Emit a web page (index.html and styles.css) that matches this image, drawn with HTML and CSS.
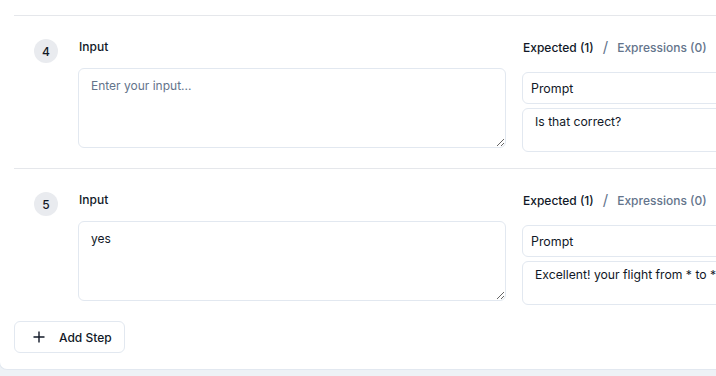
FILE: index.html
```html
<!DOCTYPE html>
<html>
<head>
<meta charset="utf-8">
<link rel="stylesheet" href="styles.css">
</head>
<body>
<div class="card">
  <div class="step">
    <div class="num">4</div>
    <div class="col left">
      <div class="label">Input</div>
      <textarea class="ta" placeholder="Enter your input..."></textarea>
    </div>
    <div class="col right">
      <div class="tabs"><span class="active">Expected (1)</span><span class="slash">/</span><span class="muted">Expressions (0)</span></div>
      <div class="prompt">Prompt</div>
      <div class="msg">Is that correct?</div>
    </div>
  </div>
  <div class="step">
    <div class="num">5</div>
    <div class="col left">
      <div class="label">Input</div>
      <textarea class="ta">yes</textarea>
    </div>
    <div class="col right">
      <div class="tabs"><span class="active">Expected (1)</span><span class="slash">/</span><span class="muted">Expressions (0)</span></div>
      <div class="prompt">Prompt</div>
      <div class="msg">Excellent! your flight from * to *</div>
    </div>
  </div>
  <button class="add">
    <svg width="12" height="12" viewBox="0 0 12 12"><path d="M6 0.5v11M0.5 6h11" stroke="#111827" stroke-width="1.4" fill="none"/></svg>
    <span>Add Step</span>
  </button>
</div>
</body>
</html>
```
FILE: styles.css
```css
html, body {
  margin: 0;
  padding: 0;
}
body {
  background: #eef2f6;
  font-family: Inter, "Noto Sans", sans-serif;
  color: #111827;
  overflow: hidden;
  width: 716px;
  height: 376px;
}
.card {
  background: #fff;
  width: 1000px;
  padding: 15px 0 16px 14px;
  border-bottom: 1px solid #e2e8f0;
  border-left: 1px solid #e2e8f0;
  border-radius: 0 0 0 8px;
  margin-left: -1px;
  box-sizing: border-box;
}
.step {
  border-top: 1px solid #e5e7eb;
  display: flex;
  align-items: flex-start;
  padding: 23px 0 16px 20px;
}
.num {
  width: 24px;
  height: 24px;
  border-radius: 50%;
  background: #e9ebef;
  display: flex;
  align-items: center;
  justify-content: center;
  font-size: 12px;
  font-weight: 500;
  flex: none;
  margin-right: 20px;
}
.col {
  display: flex;
  flex-direction: column;
}
.left {
  width: 428px;
  margin-right: 16px;
}
.right {
  width: 440px;
}
.label, .tabs {
  font-size: 12px;
  font-weight: 500;
  line-height: 16px;
}
.label {
  margin-bottom: 13px;
  padding-left: 1px;
}
.tabs {
  margin-bottom: 16px;
  padding-left: 1px;
}
.slash {
  color: #64748b;
  font-weight: 400;
  font-size: 15px;
  margin: 0 9px 0 9px;
}
.muted {
  color: #64748b;
}
.ta {
  box-sizing: border-box;
  width: 428px;
  height: 80px;
  border: 1px solid #e2e8f0;
  border-radius: 6px;
  padding: 9px 12px;
  font-family: Inter, "Noto Sans", sans-serif;
  font-size: 12px;
  color: #111827;
  outline: none;
  resize: vertical;
  display: block;
  margin: 0;
}
.ta::placeholder {
  color: #64748b;
}
.prompt {
  box-sizing: border-box;
  height: 32px;
  border: 1px solid #e2e8f0;
  border-radius: 6px;
  padding: 0 8px;
  display: flex;
  align-items: center;
  font-size: 12.4px;
  margin-bottom: 4px;
}
.msg {
  box-sizing: border-box;
  height: 44px;
  border: 1px solid #e2e8f0;
  border-radius: 6px;
  padding: 5px 12px;
  font-size: 12.2px;
  line-height: 16px;
  white-space: nowrap;
}
.add {
  display: flex;
  align-items: center;
  gap: 14px;
  height: 32px;
  width: 111px;
  box-sizing: border-box;
  background: #fff;
  border: 1px solid #e2e8f0;
  border-radius: 6px;
  padding: 0 0 0 18px;
  font-family: Inter, "Noto Sans", sans-serif;
  font-size: 12px;
  font-weight: 500;
  color: #111827;
  margin: 0;
}
```
